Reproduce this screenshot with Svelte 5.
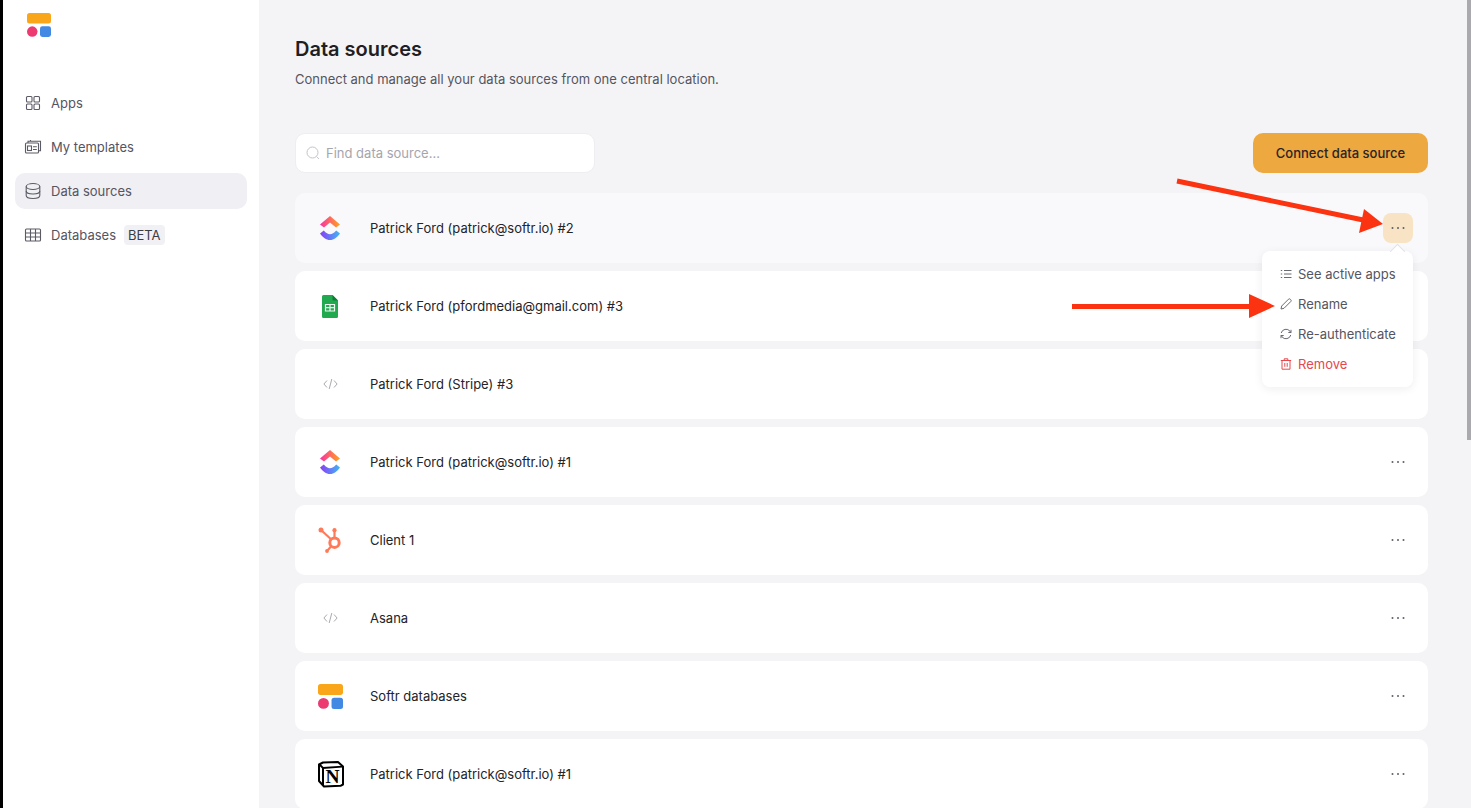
<script>
	let query = $state('');
	let openRow = $state(0);

	const nav = [
		{ label: 'Apps', icon: 'apps' },
		{ label: 'My templates', icon: 'templates' },
		{ label: 'Data sources', icon: 'data', active: true },
		{ label: 'Databases', icon: 'tables', badge: 'BETA' }
	];

	const sources = [
		{ name: 'Patrick Ford (patrick@softr.io) #2', logo: 'clickup' },
		{ name: 'Patrick Ford (pfordmedia@gmail.com) #3', logo: 'sheets' },
		{ name: 'Patrick Ford (Stripe) #3', logo: 'code' },
		{ name: 'Patrick Ford (patrick@softr.io) #1', logo: 'clickup' },
		{ name: 'Client 1', logo: 'hubspot' },
		{ name: 'Asana', logo: 'code' },
		{ name: 'Softr databases', logo: 'softr' },
		{ name: 'Patrick Ford (patrick@softr.io) #1', logo: 'notion' }
	];

	let visible = $derived(
		sources.filter((s) => s.name.toLowerCase().includes(query.toLowerCase()))
	);
</script>

{#snippet softrLogo(size)}
	<svg width={size} height={size} viewBox="0 0 24 24">
		<rect x="0" y="0" width="24" height="10.5" rx="2.5" fill="#faa61a" />
		<circle cx="5.25" cy="18.6" r="5.25" fill="#ec3b72" />
		<rect x="13" y="13.2" width="11" height="10.8" rx="2.4" fill="#4189e3" />
	</svg>
{/snippet}

{#snippet navIcon(name)}
	<svg class="nav-icon" width="18" height="18" viewBox="0 0 18 18" fill="none" stroke="#5b5b65" stroke-width="1.1">
		{#if name === 'apps'}
			<rect x="2.5" y="2.5" width="5.5" height="5.5" rx="1" />
			<rect x="10" y="2.5" width="5.5" height="5.5" rx="1" />
			<rect x="2.5" y="10" width="5.5" height="5.5" rx="1" />
			<rect x="10" y="10" width="5.5" height="5.5" rx="1" />
		{:else if name === 'templates'}
			<rect x="1.5" y="5" width="13" height="10" rx="1" />
			<path d="M4 5V3.2h12.5v9.6H14.5M6.5 3.2V1.9" />
			<rect x="3.5" y="8" width="4" height="4.5" />
			<path d="M9 8.8h3.8M9 11.5h3.8" />
		{:else if name === 'data'}
			<ellipse cx="9" cy="4.5" rx="6.8" ry="3" />
			<path d="M2.2 4.5v9c0 1.7 3 3 6.8 3s6.8-1.3 6.8-3v-9" />
			<path d="M2.2 9c0 1.7 3 3 6.8 3s6.8-1.3 6.8-3" />
		{:else}
			<rect x="1.5" y="3" width="15" height="12" rx="1" />
			<path d="M1.5 7h15M1.5 11h15M6.5 3v12M11.5 3v12" />
		{/if}
	</svg>
{/snippet}

{#snippet sourceLogo(name)}
	{#if name === 'clickup'}
		<svg width="22" height="26" viewBox="0 0 22 26">
			<defs>
				<linearGradient id="cu-top" x1="0" y1="0" x2="1" y2="0">
					<stop offset="0" stop-color="#fb2ea6" />
					<stop offset="1" stop-color="#ffa31a" />
				</linearGradient>
				<linearGradient id="cu-bottom" x1="0" y1="0" x2="1" y2="0">
					<stop offset="0" stop-color="#8b3df5" />
					<stop offset="1" stop-color="#3fb6f5" />
				</linearGradient>
			</defs>
			<path d="M11 1 21 9.500 17 12.500 11 7.500 5 12.500 1 9.500Z" fill="url(#cu-top)" />
			<path d="M1 18.500 4.800 15.500C7 18 9 19.200 11 19.200S15 18 17.200 15.500L21 18.500C18 22.500 15 25 11 25S4 22.500 1 18.500Z" fill="url(#cu-bottom)" />
		</svg>
	{:else if name === 'sheets'}
		<svg width="16" height="23" viewBox="0 0 16 23">
			<path d="M1.500 0H10.500L16 5.500V21.500A1.500 1.500 0 0 1 14.500 23H1.500A1.500 1.500 0 0 1 0 21.500V1.500A1.500 1.500 0 0 1 1.500 0Z" fill="#20a94f" />
			<path d="M10.500 0 16 5.500H11.500A1 1 0 0 1 10.500 4.500Z" fill="#137a38" />
			<path d="M3.500 9.500h9v6.500h-9zM8 9.500V16M3.500 12.700h9" fill="none" stroke="#eef9f2" stroke-width="1.200" />
		</svg>
	{:else if name === 'code'}
		<svg width="15" height="12" viewBox="0 0 15 12" fill="none" stroke="#a9a9b0" stroke-width="1">
			<path d="M4 2.500.9 6 4 9.500M11 2.500 14.100 6 11 9.500M8.800 1 6.200 11" />
		</svg>
	{:else if name === 'hubspot'}
		<svg class="hubspot" width="26" height="26" viewBox="0 0 26 26" fill="none" stroke="#ff7a59">
			<circle cx="16.500" cy="15.700" r="4.700" stroke-width="3" />
			<path d="M3 3 12.800 12M16.500 10V4M13 19.500 9 24" stroke-width="2.200" />
			<circle cx="3" cy="3" r="2.500" fill="#ff7a59" stroke="none" />
			<circle cx="16.500" cy="3.200" r="2.100" fill="#ff7a59" stroke="none" />
			<circle cx="9" cy="24" r="1.900" fill="#ff7a59" stroke="none" />
		</svg>
	{:else if name === 'softr'}
		{@render softrLogo(25)}
	{:else}
		<svg class="notion" width="26" height="27" viewBox="0 0 26 27">
			<path d="M5 1.500 20 1 25 5.500V23.500L22.500 24.800 6 25.500 1 20V3.500Z" fill="#fff" stroke="#000" stroke-width="2" stroke-linejoin="round" />
			<path d="M1.500 3.500 5 7 24.500 5.700" fill="none" stroke="#000" stroke-width="1.800" />
			<path d="M5 7V25" fill="none" stroke="#000" stroke-width="2" />
			<text x="14.500" y="22" text-anchor="middle" class="notion-mark">N</text>
		</svg>
	{/if}
{/snippet}

<div class="page">
	<div class="edge"></div>

	<aside class="sidebar">
		<div class="logo">{@render softrLogo(24)}</div>
		<nav>
			{#each nav as item}
				<a class="nav-item" class:active={item.active} href="#top">
					{@render navIcon(item.icon)}
					<span>{item.label}</span>
					{#if item.badge}<span class="badge">{item.badge}</span>{/if}
				</a>
			{/each}
		</nav>
	</aside>

	<main>
		<h1>Data sources</h1>
		<p class="lead">Connect and manage all your data sources from one central location.</p>

		<div class="toolbar">
			<label class="search">
				<svg width="14" height="14" viewBox="0 0 14 14" fill="none" stroke="#c4c4ca" stroke-width="1">
					<circle cx="6.500" cy="6.500" r="5.500" />
					<path d="M10.500 10.500 13 13" />
				</svg>
				<input bind:value={query} placeholder="Find data source..." />
			</label>
			<button class="connect">Connect data source</button>
		</div>

		<ul class="list">
			{#each visible as source, i}
				<li class="row" class:hovered={openRow === i}>
					<div class="row-logo">{@render sourceLogo(source.logo)}</div>
					<span class="row-name">{source.name}</span>
					<div class="more-wrap" class:open={openRow === i}>
						<button class="more" aria-label="More" onclick={() => (openRow = openRow === i ? -1 : i)}>
							<svg width="14" height="4" viewBox="0 0 14 4" fill="#5f5f68">
								<circle cx="1.500" cy="2" r="1" />
								<circle cx="7" cy="2" r="1" />
								<circle cx="12.500" cy="2" r="1" />
							</svg>
						</button>
						{#if openRow === i}
							<div class="menu">
								<span class="caret"></span>
								<button class="menu-item">
									<svg width="12" height="12" viewBox="0 0 12 12" fill="none" stroke="#6a6a73">
										<path d="M4 2.500h7.500M4 6h7.500M4 9.500h7.500M.8 2.500h1.400M.8 6h1.400M.8 9.500h1.400" />
									</svg>
									See active apps
								</button>
								<button class="menu-item">
									<svg width="12" height="12" viewBox="0 0 12 12" fill="none" stroke="#6a6a73">
										<path d="M1 11 1.700 8 8.500 1.200a1.200 1.200 0 0 1 1.700 0l.6.6a1.200 1.200 0 0 1 0 1.700L4 10.300Z" stroke-linejoin="round" />
									</svg>
									Rename
								</button>
								<button class="menu-item">
									<svg width="12" height="12" viewBox="0 0 12 12" fill="none" stroke="#6a6a73">
										<path d="M1.200 5A5 5 0 0 1 10 3.200L11 4.500M10.800 7A5 5 0 0 1 2 8.800L1 7.500" />
										<path d="M11 1.800v2.700H8.300M1 10.200V7.500h2.700" />
									</svg>
									Re-authenticate
								</button>
								<button class="menu-item danger">
									<svg width="12" height="12" viewBox="0 0 12 12" fill="none" stroke="#e5484d">
										<path d="M.8 2.500h10.400M4.200 2.500V.8h3.600v1.700M2 2.500v8.700h8V2.500M4.800 5v3.800M7.200 5v3.800" />
									</svg>
									Remove
								</button>
							</div>
						{/if}
					</div>
				</li>
			{/each}
		</ul>

		<div class="scrollbar"></div>
	</main>

	<!-- annotation arrows on top of the screenshot -->
	<svg class="arrows" width="1471" height="808" viewBox="0 0 1471 808">
		<path d="M1177 181 1368 221" stroke="#fb3310" stroke-width="5" />
		<path d="M1383 224 1364 209 1359 233Z" fill="#fb3310" />
		<path d="M1072 306.500H1252" stroke="#fb3310" stroke-width="5" />
		<path d="M1275 306 1249 294V318Z" fill="#fb3310" />
	</svg>
</div>

<style>
	:global(body) {
		margin: 0;
		overflow: hidden;
		font-family: Inter, 'Liberation Sans', sans-serif;
	}

	.page {
		position: relative;
		display: flex;
		height: 100vh;
		overflow: hidden;
		background: #f4f4f6;
	}

	.edge {
		flex: 0 0 3px;
		background: #000;
	}

	.sidebar {
		flex: 0 0 256px;
		box-sizing: border-box;
		padding: 13px 12px 0;
		background: #fff;
	}

	.logo {
		height: 24px;
		margin: 0 0 48px 12px;
	}

	.logo svg {
		display: block;
	}

	nav {
		display: flex;
		flex-direction: column;
		gap: 8px;
	}

	.nav-item {
		display: flex;
		align-items: center;
		height: 36px;
		padding: 0 10px 0 9px;
		border-radius: 10px;
		color: #55555f;
		font-size: 13px;
		text-decoration: none;
	}

	.nav-item.active {
		background: #efeff4;
	}

	.nav-icon {
		margin-right: 9px;
	}

	.badge {
		margin-left: 8px;
		padding: 2px 4px;
		border-radius: 4px;
		background: #f1f1f5;
		color: #3c3c44;
		font-size: 13px;
		line-height: 16px;
	}

	main {
		position: relative;
		flex: 1;
		min-width: 0;
		padding: 0 43px 0 36px;
	}

	h1 {
		margin: 37px 0 0;
		color: #1f1f23;
		font-size: 20px;
		font-weight: 600;
		line-height: 24px;
	}

	.lead {
		margin: 10px 0 0;
		color: #55555f;
		font-size: 13px;
		line-height: 16px;
	}

	.toolbar {
		display: flex;
		justify-content: space-between;
		align-items: center;
		margin-top: 46px;
	}

	.search {
		display: flex;
		align-items: center;
		gap: 6px;
		box-sizing: border-box;
		width: 300px;
		height: 40px;
		padding: 0 10px;
		border: 1px solid #eeeef2;
		border-radius: 10px;
		background: #fff;
	}

	.search input {
		flex: 1;
		min-width: 0;
		padding: 0;
		border: 0;
		outline: 0;
		background: none;
		color: #1f1f23;
		font: inherit;
		font-size: 13px;
	}

	.search input::placeholder {
		color: #a5a5ad;
		opacity: 1;
	}

	.connect {
		width: 175px;
		height: 40px;
		border: 0;
		border-radius: 10px;
		background: #eda93f;
		color: #2a2327;
		font: inherit;
		font-size: 13px;
		font-weight: 500;
		cursor: pointer;
	}

	.list {
		display: flex;
		flex-direction: column;
		gap: 8px;
		margin: 20px 0 0;
		padding: 0;
		list-style: none;
	}

	.row {
		display: flex;
		align-items: center;
		flex: 0 0 70px;
		height: 70px;
		padding-right: 15px;
		border-radius: 10px;
		background: #fff;
	}

	.row.hovered {
		background: #f9f9fc;
	}

	.row-logo {
		display: flex;
		justify-content: center;
		align-items: center;
		flex: 0 0 70px;
		margin-right: 5px;
	}

	.row-logo svg {
		display: block;
	}

	.row-logo .hubspot {
		margin-left: 2px;
	}

	.row-logo .notion {
		margin-left: 1px;
	}

	.notion-mark {
		font-family: 'Liberation Serif', serif;
		font-size: 19.500px;
		font-weight: 700;
		fill: #000;
	}

	.row-name {
		flex: 1;
		color: #232328;
		font-size: 13px;
	}

	.more-wrap {
		position: relative;
	}

	.more-wrap.open {
		z-index: 2;
	}

	.more {
		display: flex;
		justify-content: center;
		align-items: center;
		width: 30px;
		height: 30px;
		padding: 0;
		border: 0;
		border-radius: 8px;
		background: none;
		cursor: pointer;
	}

	.open .more {
		background: #f8e3c4;
	}

	.menu {
		position: absolute;
		top: 38px;
		right: 0;
		box-sizing: border-box;
		width: 151px;
		height: 136px;
		padding: 8px 0;
		border-radius: 8px;
		background: #fff;
		box-shadow: 0 2px 10px rgba(30, 30, 50, 0.07);
	}

	.caret {
		position: absolute;
		top: -5px;
		right: 10px;
		width: 10px;
		height: 10px;
		border-top: 1px solid #e2e2e7;
		border-left: 1px solid #e2e2e7;
		background: #fff;
		transform: rotate(45deg);
	}

	.menu-item {
		position: relative;
		display: flex;
		align-items: center;
		gap: 6px;
		width: 100%;
		height: 30px;
		padding: 0 0 0 18px;
		border: 0;
		background: none;
		color: #55555f;
		font: inherit;
		font-size: 13px;
		white-space: nowrap;
		cursor: pointer;
	}

	.menu-item.danger {
		color: #e5484d;
	}

	.scrollbar {
		position: absolute;
		top: 0;
		right: 0;
		width: 4px;
		height: 440px;
		background: #a9a9ae;
	}

	.arrows {
		position: absolute;
		top: 0;
		left: 0;
		z-index: 3;
		pointer-events: none;
	}
</style>
